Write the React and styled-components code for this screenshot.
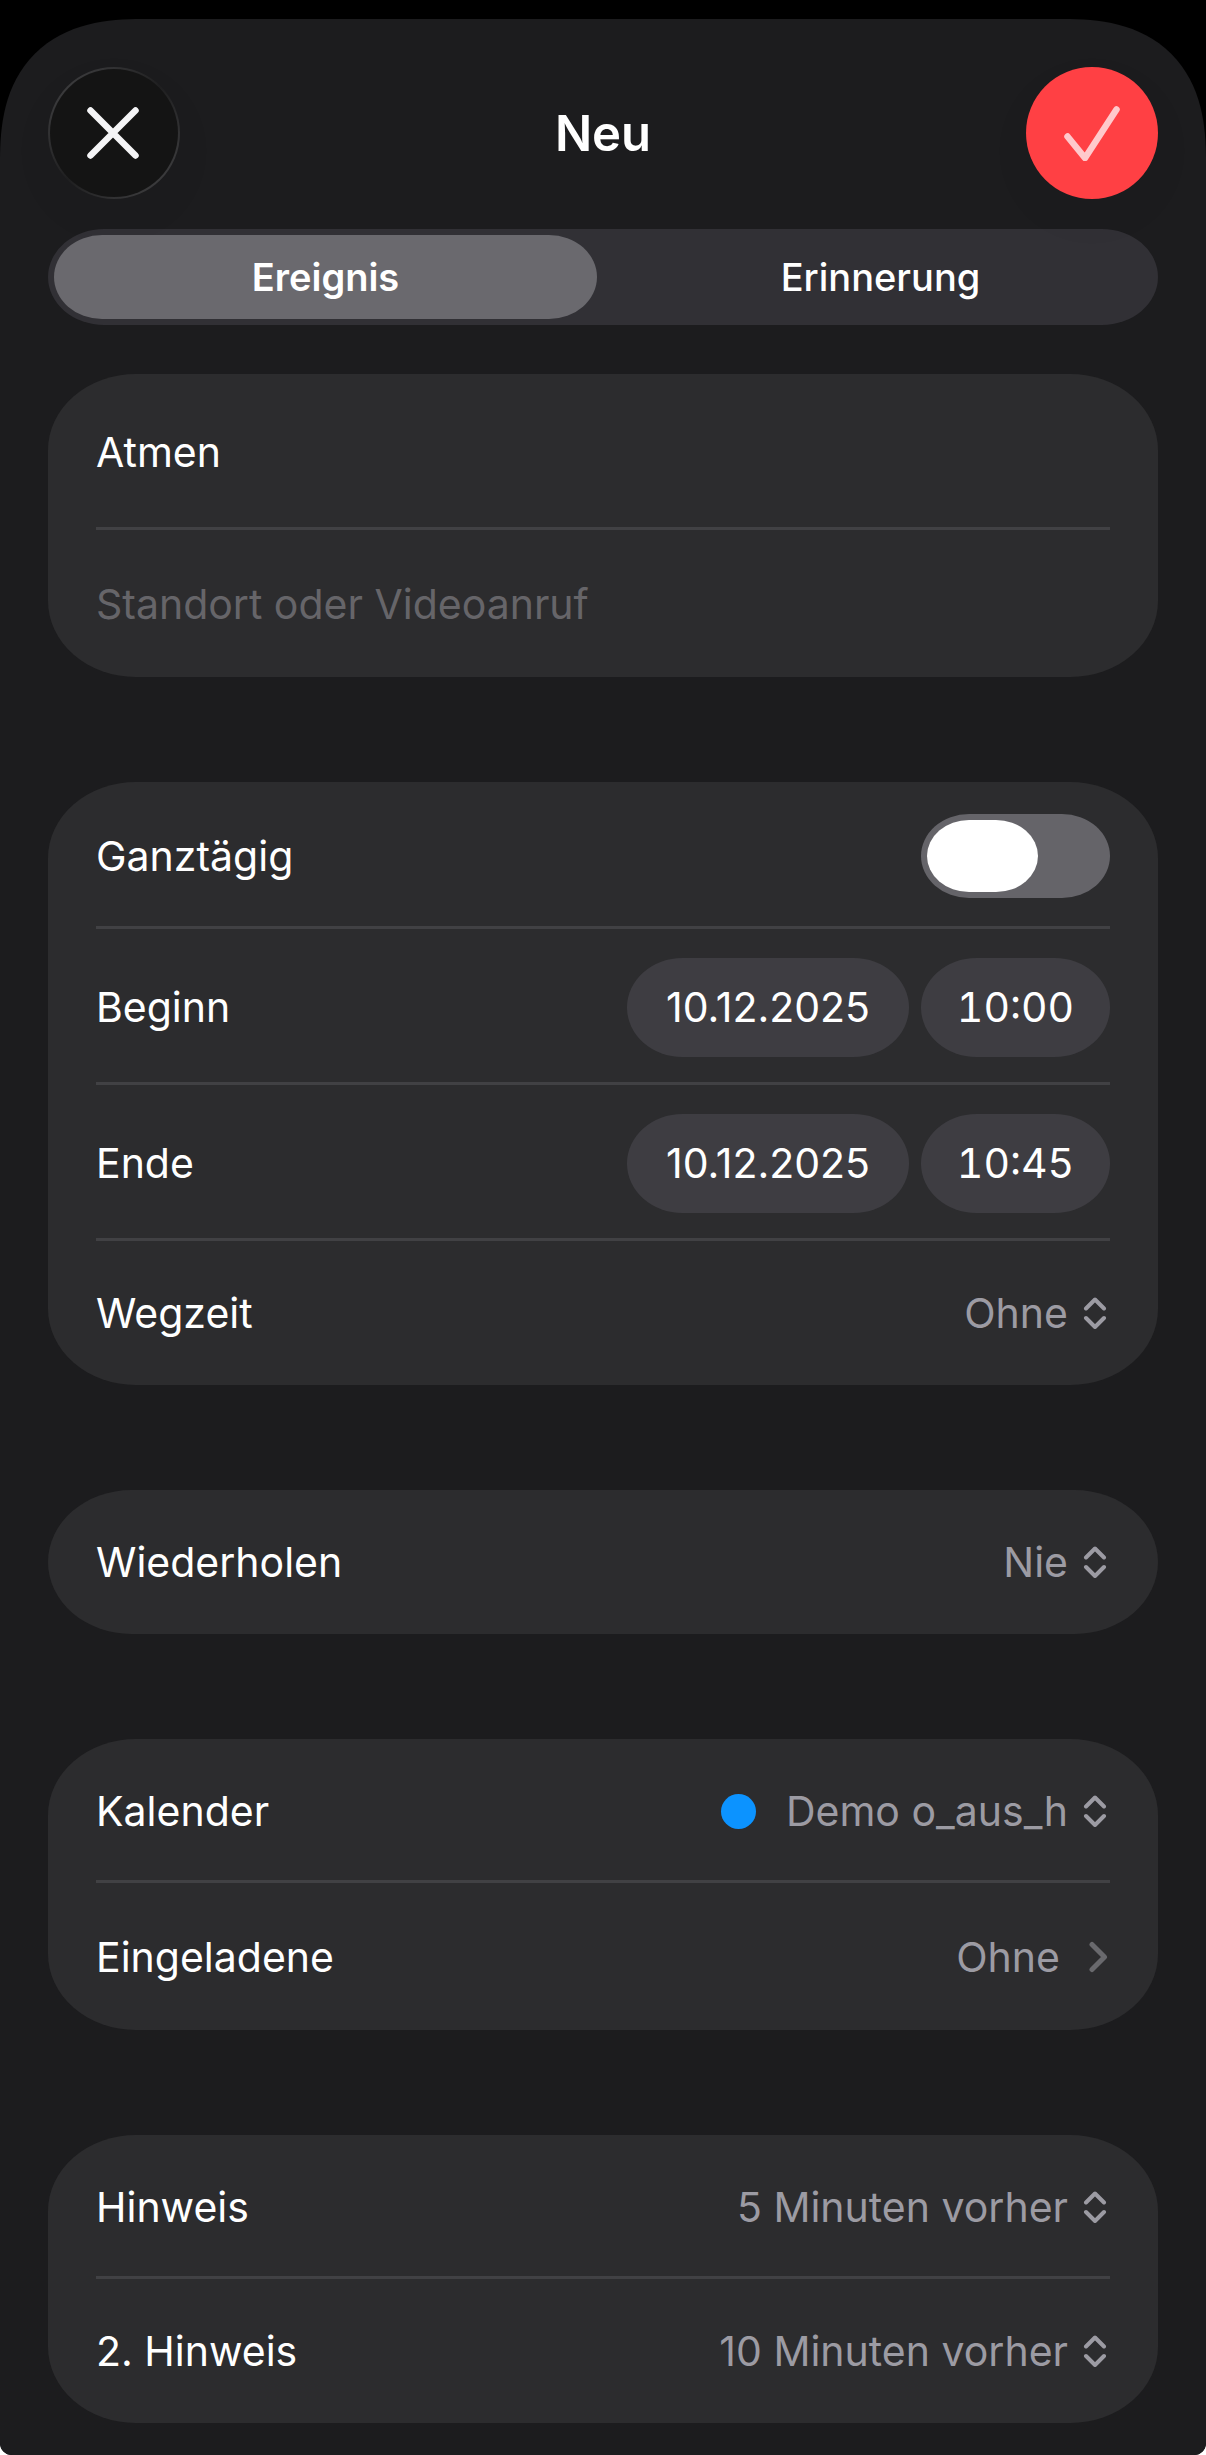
import React, { useState } from "react";
import styled, { createGlobalStyle } from "styled-components";

const GlobalStyle = createGlobalStyle`
  * { box-sizing: border-box; }
  html { background: #ffffff; }
  body {
    margin: 0;
    font-family: Inter, Roboto, "Liberation Sans", sans-serif;
    font-size: 41px;
    line-height: 50px;
    color: #ffffff;
  }
  button, input, select {
    margin: 0;
    padding: 0;
    border: 0;
    background: none;
    color: inherit;
    font: inherit;
  }
`;

const Screen = styled.div`
  min-height: 100vh;
  padding-top: 19px;
  background: #000000;
  border-radius: 0 0 12px 12px;
  overflow: hidden;
  display: flex;
  flex-direction: column;
`;

const Sheet = styled.main`
  flex: 1;
  padding: 48px 48px 32px;
  background: #1c1c1e;
  border-radius: 116px 116px 0 0;
  @supports (corner-shape: superellipse(1.3)) {
    border-radius: 142px 142px 0 0;
    corner-shape: superellipse(1.3);
  }
`;

const Header = styled.header`
  display: flex;
  align-items: center;
  justify-content: space-between;
  margin-bottom: 30px;
`;

const Title = styled.h1`
  margin: 0;
  padding-top: 2px;
  font-size: 49px;
  line-height: 60px;
  font-weight: 600;
`;

const RoundButton = styled.button`
  display: flex;
  align-items: center;
  justify-content: center;
  width: 132px;
  height: 132px;
  border-radius: 50%;
  box-shadow: 0 18px 48px rgba(0, 0, 0, 0.04);
`;

const CloseButton = styled(RoundButton)`
  border: 2px solid transparent;
  background:
    linear-gradient(#141414, #141414) padding-box,
    linear-gradient(135deg, #454547, #1f1f20 50%, #454547) border-box;
`;

const ConfirmButton = styled(RoundButton)`
  background: #ff4044;
`;

const Segments = styled.div`
  display: grid;
  grid-template-columns: 1fr 1fr;
  gap: 12px;
  height: 96px;
  padding: 6px;
  margin-bottom: 49px;
  border-radius: 56px / 48px;
  background: #313035;
`;

const Segment = styled.button`
  border-radius: 48px / 42px;
  font-size: 38px;
  line-height: 48px;
  font-weight: ${(p) => (p.$active ? 600 : 500)};
  background: ${(p) => (p.$active ? "#6a696e" : "transparent")};
`;

const Form = styled.div`
  display: flex;
  flex-direction: column;
  gap: 105px;
`;

const Card = styled.section`
  padding: 0 48px;
  border-radius: 88px / 76px;
  background: #2c2c2e;
`;

const rowHeights = { regular: 144, medium: 147, tall: 156 };

const Row = styled.div`
  display: flex;
  align-items: center;
  justify-content: space-between;
  gap: 24px;
  min-height: ${(p) => rowHeights[p.$size || "regular"]}px;
  &:not(:last-child) {
    box-shadow: inset 0 -3px #414144;
  }
`;

const TextField = styled.input`
  flex: 1;
  min-width: 0;
  outline: none;
  &::placeholder {
    color: #666569;
    opacity: 1;
  }
`;

const Value = styled.div`
  display: flex;
  align-items: center;
  gap: 12px;
  color: #9c9ba3;
`;

const Picker = styled.select`
  appearance: none;
  field-sizing: content;
  text-align: right;
  outline: none;
  option { color: #ffffff; background: #2c2c2e; }
`;

const LinkValue = styled.a`
  display: flex;
  align-items: center;
  gap: 26px;
  color: #9c9ba3;
  text-decoration: none;
`;

const Dot = styled.span`
  width: 35px;
  height: 35px;
  margin-right: 18px;
  border-radius: 50%;
  background: #0c93ff;
`;

const Pills = styled.div`
  display: flex;
  gap: 12px;
`;

const Pill = styled.button`
  min-width: ${(p) => (p.$wide ? 282 : 189)}px;
  height: 99px;
  padding: 0 24px;
  border-radius: 56px / 50px;
  background: #3e3d42;
  font-variant-numeric: ${(p) => (p.$wide ? "normal" : "tabular-nums")};
`;

const Switch = styled.input`
  appearance: none;
  display: flex;
  width: 189px;
  height: 84px;
  padding: 6px;
  border-radius: 48px / 42px;
  background: #656469;
  &::before {
    content: "";
    width: 111px;
    border-radius: 42px / 36px;
    background: #ffffff;
  }
  &:checked {
    justify-content: flex-end;
    background: #30d158;
  }
`;

function CloseIcon() {
  return (
    <svg width="54" height="52" viewBox="0 0 54 52" fill="none" stroke="#f4f4f6" strokeWidth="6.5" strokeLinecap="round" aria-hidden="true">
      <path d="M3.5 3.5 48.5 48.5M48.5 3.5 3.5 48.5" />
    </svg>
  );
}

function CheckIcon() {
  return (
    <svg width="56" height="56" viewBox="0 0 56 56" fill="none" stroke="#ffc9cc" strokeWidth="6.5" strokeLinecap="round" strokeLinejoin="round" aria-hidden="true">
      <path d="M3.5 31.5 21 53 52.5 4.5" />
    </svg>
  );
}

function UpDownIcon() {
  return (
    <svg width="30" height="32" viewBox="0 0 30 32" fill="none" stroke="currentColor" strokeWidth="4" strokeLinecap="round" strokeLinejoin="round" aria-hidden="true">
      <path d="M6 11.5 15 2.5 24 11.5M6 21 15 30 24 21" />
    </svg>
  );
}

function ForwardIcon() {
  return (
    <svg width="24" height="32" viewBox="0 0 24 32" fill="none" stroke="#69696d" strokeWidth="5" strokeLinecap="round" strokeLinejoin="round" aria-hidden="true">
      <path d="M6 3.5 18.5 16 6 28.5" />
    </svg>
  );
}

function PickerRow({ id, label, options, dot }) {
  return (
    <Row>
      <label htmlFor={id}>{label}</label>
      <Value>
        {dot && <Dot />}
        <Picker id={id}>
          {options.map((o) => (
            <option key={o}>{o}</option>
          ))}
        </Picker>
        <UpDownIcon />
      </Value>
    </Row>
  );
}

function DateRow({ label, date, time }) {
  return (
    <Row $size="tall">
      <span>{label}</span>
      <Pills>
        <Pill type="button" $wide>{date}</Pill>
        <Pill type="button">{time}</Pill>
      </Pills>
    </Row>
  );
}

export default function App() {
  const [kind, setKind] = useState("Ereignis");
  return (
    <>
      <GlobalStyle />
      <Screen>
        <Sheet>
          <Header>
            <CloseButton type="button" aria-label="Schließen">
              <CloseIcon />
            </CloseButton>
            <Title>Neu</Title>
            <ConfirmButton type="button" aria-label="Sichern">
              <CheckIcon />
            </ConfirmButton>
          </Header>
          <Segments>
            {["Ereignis", "Erinnerung"].map((k) => (
              <Segment key={k} type="button" $active={kind === k} aria-pressed={kind === k} onClick={() => setKind(k)}>
                {k}
              </Segment>
            ))}
          </Segments>
          <Form>
            <Card>
              <Row $size="tall">
                <TextField aria-label="Titel" defaultValue="Atmen" />
              </Row>
              <Row $size="medium">
                <TextField aria-label="Standort oder Videoanruf" placeholder="Standort oder Videoanruf" />
              </Row>
            </Card>
            <Card>
              <Row $size="medium">
                <label htmlFor="allday">Ganztägig</label>
                <Switch id="allday" type="checkbox" />
              </Row>
              <DateRow label="Beginn" date="10.12.2025" time="10:00" />
              <DateRow label="Ende" date="10.12.2025" time="10:45" />
              <PickerRow id="travel" label="Wegzeit" options={["Ohne"]} />
            </Card>
            <Card>
              <PickerRow id="repeat" label="Wiederholen" options={["Nie"]} />
            </Card>
            <Card>
              <PickerRow id="calendar" label="Kalender" options={["Demo o_aus_h"]} dot />
              <Row $size="medium">
                <span>Eingeladene</span>
                <LinkValue href="#eingeladene">
                  Ohne
                  <ForwardIcon />
                </LinkValue>
              </Row>
            </Card>
            <Card>
              <PickerRow id="alert" label="Hinweis" options={["5 Minuten vorher"]} />
              <PickerRow id="alert2" label="2. Hinweis" options={["10 Minuten vorher"]} />
            </Card>
          </Form>
        </Sheet>
      </Screen>
    </>
  );
}
